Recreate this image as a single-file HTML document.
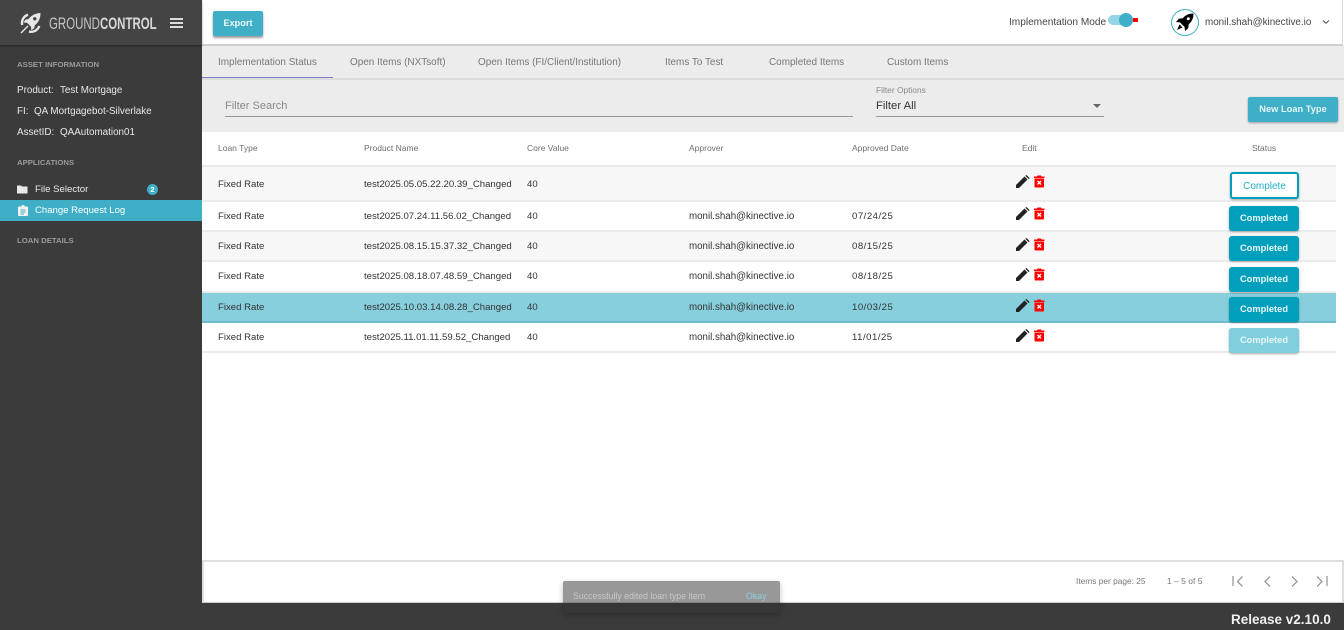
<!DOCTYPE html>
<html lang="en">
<head>
<meta charset="utf-8">
<title>GroundControl</title>
<style>
html,body{margin:0;padding:0;width:1344px;height:630px;overflow:hidden;background:#fff;font-family:"Liberation Sans",sans-serif;}
*{box-sizing:border-box}
.a{position:absolute;white-space:nowrap}
.sb{color:#e8e8e8;font-size:9.850px;line-height:12px}
.sh{color:#9a9a9a;font-size:7.750px;font-weight:bold;line-height:10px}
.tab{color:#777;font-size:9.950px;line-height:12px;top:57px}
.th{color:#6e6e6e;font-size:8.500px;line-height:10px;top:143px}
.row{position:absolute;left:202px;width:1134px;border-bottom:2px solid #ebebeb}
.td{position:absolute;color:#333;font-size:9.600px;line-height:12px;white-space:nowrap}
.m{font-size:9.750px}
.d{letter-spacing:.5px}
.btn{position:absolute;left:1229px;width:70px;height:25px;background:#00a0bc;border-radius:3px;color:#e8f6f9;font-size:9.300px;font-weight:bold;text-align:center;line-height:25px;box-shadow:0 1px 2px rgba(0,0,0,.35)}
svg{position:absolute;display:block}
</style>
</head>
<body>
<!-- page background -->
<div class="a" style="left:202px;top:45px;width:1142px;height:87px;background:#ececec"></div>
<div class="a" style="left:202px;top:0;width:1141px;height:46px;background:#fff;border-bottom:2px solid #cfcfcf;border-right:1px solid #ddd"></div>
<div class="a" style="left:202px;top:78px;width:1142px;height:2px;background:#dcdcdc"></div>
<div class="a" style="left:202px;top:77px;width:131px;height:1px;background:#7f7fd0"></div>

<!-- sidebar -->
<div class="a" style="left:0;top:0;width:202px;height:630px;background:#3b3b3b"></div>
<div class="a" style="left:0;top:0;width:202px;height:45px;background:#444;box-shadow:0 1px 2px rgba(0,0,0,.35)"></div>
<svg style="left:20px;top:12px" width="22" height="22" viewBox="0 0 22 22">
  <path d="M20.500 1C15.500 1.200 11.500 3.200 8.500 7L5.500 7.600 3.500 10.500 7 10.800 11 14.800 11.300 18.300 14.200 16.300 14.800 13.300C18.600 10.300 20.600 6.300 20.500 1Z" fill="#e6e6e6"/>
  <circle cx="14.800" cy="6.800" r="1.700" fill="#444"/>
  <path d="M1 21 8 14" stroke="#e6e6e6" stroke-width="1.400"/>
  <path d="M2.200 13A8.800 8.800 0 0 1 8 2.700M9 19.600A8.800 8.800 0 0 0 19.300 14" stroke="#e6e6e6" stroke-width="2.400" fill="none"/>
</svg>
<div class="a" style="left:49px;top:15px;font-size:16.500px;line-height:18px;color:#c4c4c4;transform-origin:0 50%;transform:scaleX(.695)">GROUND<b style="color:#d8d8d8">CONTROL</b></div>
<div class="a" style="left:170px;top:18px;width:13px;height:1.500px;background:#ddd"></div>
<div class="a" style="left:170px;top:22px;width:13px;height:1.500px;background:#ddd"></div>
<div class="a" style="left:170px;top:26px;width:13px;height:1.500px;background:#ddd"></div>

<div class="a sh" style="left:17px;top:60px">ASSET INFORMATION</div>
<div class="a sb" style="left:17px;top:85px">Product:</div><div class="a sb" style="left:60px;top:85px">Test Mortgage</div>
<div class="a sb" style="left:17px;top:106px">FI:</div><div class="a sb" style="left:34px;top:106px">QA Mortgagebot-Silverlake</div>
<div class="a sb" style="left:17px;top:127px">AssetID:</div><div class="a sb" style="left:60px;top:127px">QAAutomation01</div>
<div class="a sh" style="left:17px;top:158px">APPLICATIONS</div>
<svg style="left:17px;top:184px" width="11" height="10" viewBox="0 0 11 10"><path d="M0 1.500H4L5 2.500H10.500V9.500H0Z" fill="#e8e8e8"/></svg>
<div class="a sb" style="left:35px;top:184px;font-size:9.600px">File Selector</div>
<div class="a" style="left:147px;top:184px;width:11px;height:11px;border-radius:50%;background:#3eafc6;color:#fff;font-size:7.500px;font-weight:bold;line-height:11px;text-align:center">2</div>
<div class="a" style="left:0;top:200px;width:202px;height:21px;background:#3eafc6"></div>
<svg style="left:18px;top:205px" width="10" height="11" viewBox="0 0 10 11"><path d="M1 1.500H3.200C3.400 .5 4.200 0 5 0S6.600 .5 6.800 1.500H9C9.600 1.500 10 1.900 10 2.500V10C10 10.600 9.600 11 9 11H1C.4 11 0 10.600 0 10V2.500C0 1.900 .4 1.500 1 1.500Z" fill="#f2f2f2"/><path d="M2.500 5H7.500M2.500 7H7.500M2.500 9H6" stroke="#3eafc6" stroke-width=".9"/></svg>
<div class="a sb" style="left:35px;top:205px;color:#fff;font-size:9.550px">Change Request Log</div>
<div class="a sh" style="left:17px;top:236px">LOAN DETAILS</div>

<!-- top bar -->
<div class="a" style="left:213px;top:11px;width:50px;height:25px;background:#3eafc6;border-radius:2px;color:#f2fbfd;font-size:9.200px;font-weight:bold;text-align:center;line-height:25px;box-shadow:0 2px 2px rgba(0,0,0,.4)">Export</div>
<div class="a" style="left:1009px;top:16px;color:#444;font-size:10.100px;line-height:13px">Implementation Mode</div>
<div class="a" style="left:1108px;top:15px;width:24px;height:10px;border-radius:5px;background:#94d6e3"></div>
<div class="a" style="left:1133px;top:18px;width:5px;height:4px;background:#f00"></div>
<div class="a" style="left:1119px;top:13px;width:14px;height:14px;border-radius:50%;background:#3eafc6"></div>
<div class="a" style="left:1171px;top:9px;width:28px;height:27px;border-radius:50%;border:1.500px solid #3eafc6;background:#fff"></div>
<svg style="left:1175px;top:12px" width="20" height="20" viewBox="0 0 20 20">
  <path d="M18.500 1.500C14 1.500 10.500 3 7.700 6.300L3.800 6.800 1 10 5 10.400 9.600 15 10 19 13.200 16.200 13.700 12.300C17 9.500 18.500 6 18.500 1.500Z" fill="#000"/>
  <circle cx="13.300" cy="6.700" r="1.500" fill="#fff"/>
  <path d="M4.500 12.500 2 18 7.500 15.500Z" fill="#000"/>
</svg>
<div class="a" style="left:1205px;top:16px;color:#444;font-size:9.850px;line-height:13px">monil.shah@kinective.io</div>
<svg style="left:1322px;top:19px" width="8" height="6" viewBox="0 0 8 6"><path d="M1 1.500 4 4.300 7 1.500" fill="none" stroke="#555" stroke-width="1"/></svg>

<!-- tabs -->
<div class="a tab" style="left:218px">Implementation Status</div>
<div class="a tab" style="left:350px">Open Items (NXTsoft)</div>
<div class="a tab" style="left:478px">Open Items (FI/Client/Institution)</div>
<div class="a tab" style="left:665px">Items To Test</div>
<div class="a tab" style="left:769px">Completed Items</div>
<div class="a tab" style="left:887px">Custom Items</div>

<!-- filters -->
<div class="a" style="left:225px;top:99px;color:#888;font-size:11px;line-height:14px">Filter Search</div>
<div class="a" style="left:225px;top:116px;width:628px;height:1px;background:#999"></div>
<div class="a" style="left:876px;top:85px;color:#888;font-size:8.400px;line-height:10px">Filter Options</div>
<div class="a" style="left:876px;top:99px;color:#333;font-size:11.300px;line-height:14px">Filter All</div>
<div class="a" style="left:1093px;top:104px;width:0;height:0;border-left:4px solid transparent;border-right:4px solid transparent;border-top:4px solid #666"></div>
<div class="a" style="left:876px;top:116px;width:228px;height:1px;background:#999"></div>
<div class="a" style="left:1248px;top:97px;width:90px;height:25px;background:#3eafc6;border-radius:2px;color:#e6f6f9;font-size:9.300px;font-weight:bold;text-align:center;line-height:25px;box-shadow:0 1px 2px rgba(0,0,0,.35)">New Loan Type</div>

<!-- table header -->
<div class="a th" style="left:218px">Loan Type</div>
<div class="a th" style="left:364px">Product Name</div>
<div class="a th" style="left:527px">Core Value</div>
<div class="a th" style="left:689px">Approver</div>
<div class="a th" style="left:852px">Approved Date</div>
<div class="a th" style="left:1022px">Edit</div>
<div class="a th" style="left:1252px">Status</div>
<div class="row" style="top:165px;height:2px;border-bottom:0;background:#e9e9e9"></div>

<!-- rows -->
<div class="row" style="top:167px;height:35px;background:#f7f7f7"></div>
<div class="row" style="top:202px;height:30px;background:#fff"></div>
<div class="row" style="top:232px;height:30px;background:#f7f7f7"></div>
<div class="row" style="top:262px;height:31px;background:#fff"></div>
<div class="row" style="top:293px;height:30px;background:#87cfdd;border-bottom-color:#6fbccb"></div>
<div class="row" style="top:323px;height:30px;background:#fff"></div>

<div class="td" style="left:218px;top:179px">Fixed Rate</div>
<div class="td" style="left:364px;top:179px">test2025.05.05.22.20.39_Changed</div>
<div class="td" style="left:527px;top:179px">40</div>

<div class="td" style="left:218px;top:211px">Fixed Rate</div>
<div class="td" style="left:364px;top:211px">test2025.07.24.11.56.02_Changed</div>
<div class="td" style="left:527px;top:211px">40</div>
<div class="td m" style="left:689px;top:211px">monil.shah@kinective.io</div>
<div class="td d" style="left:852px;top:211px">07/24/25</div>

<div class="td" style="left:218px;top:241px">Fixed Rate</div>
<div class="td" style="left:364px;top:241px">test2025.08.15.15.37.32_Changed</div>
<div class="td" style="left:527px;top:241px">40</div>
<div class="td m" style="left:689px;top:241px">monil.shah@kinective.io</div>
<div class="td d" style="left:852px;top:241px">08/15/25</div>

<div class="td" style="left:218px;top:271px">Fixed Rate</div>
<div class="td" style="left:364px;top:271px">test2025.08.18.07.48.59_Changed</div>
<div class="td" style="left:527px;top:271px">40</div>
<div class="td m" style="left:689px;top:271px">monil.shah@kinective.io</div>
<div class="td d" style="left:852px;top:271px">08/18/25</div>

<div class="td" style="left:218px;top:302px">Fixed Rate</div>
<div class="td" style="left:364px;top:302px">test2025.10.03.14.08.28_Changed</div>
<div class="td" style="left:527px;top:302px">40</div>
<div class="td m" style="left:689px;top:302px">monil.shah@kinective.io</div>
<div class="td d" style="left:852px;top:302px">10/03/25</div>

<div class="td" style="left:218px;top:332px">Fixed Rate</div>
<div class="td" style="left:364px;top:332px">test2025.11.01.11.59.52_Changed</div>
<div class="td" style="left:527px;top:332px">40</div>
<div class="td m" style="left:689px;top:332px">monil.shah@kinective.io</div>
<div class="td d" style="left:852px;top:332px">11/01/25</div>

<!-- icons -->
<svg width="0" height="0" style="left:0;top:0">
  <defs>
    <g id="pen"><path d="M0 13V10L8.500 1.500 11.500 4.500 3 13Z" fill="#222"/><path d="M9.500 .5C10 0 10.500 0 11 .5L13 2.500C13.500 3 13.500 3.500 13 4L12.300 3.700 9.500 1Z" fill="#222"/></g>
    <g id="bin"><path d="M0 1.500H3L3.500 .5H7L7.500 1.500H10.500V3H0Z" fill="#f00"/><path d="M.5 3.500H10V11.500C10 12 9.600 12.500 9 12.500H1.500C.9 12.500 .5 12 .5 11.500Z" fill="#f00"/><path d="M3.500 6 7 9.500M7 6 3.500 9.500" stroke="#fff" stroke-width="1.300"/></g>
  </defs>
</svg>
<svg style="left:1016px;top:175px" width="14" height="14"><use href="#pen"/></svg><svg style="left:1034px;top:175px" width="11" height="13"><use href="#bin"/></svg>
<svg style="left:1016px;top:207px" width="14" height="14"><use href="#pen"/></svg><svg style="left:1034px;top:207px" width="11" height="13"><use href="#bin"/></svg>
<svg style="left:1016px;top:238px" width="14" height="14"><use href="#pen"/></svg><svg style="left:1034px;top:238px" width="11" height="13"><use href="#bin"/></svg>
<svg style="left:1016px;top:268px" width="14" height="14"><use href="#pen"/></svg><svg style="left:1034px;top:268px" width="11" height="13"><use href="#bin"/></svg>
<svg style="left:1016px;top:299px" width="14" height="14"><use href="#pen"/></svg><svg style="left:1034px;top:299px" width="11" height="13"><use href="#bin"/></svg>
<svg style="left:1016px;top:329px" width="14" height="14"><use href="#pen"/></svg><svg style="left:1034px;top:329px" width="11" height="13"><use href="#bin"/></svg>

<!-- status -->
<div class="btn" style="left:1230px;top:172px;width:69px;height:27px;background:#fff;border:2px solid #00a0bc;color:#1fb0c9;font-size:10px;font-weight:normal;line-height:26px">Complete</div>
<div class="btn" style="top:206px">Completed</div>
<div class="btn" style="top:236px">Completed</div>
<div class="btn" style="top:267px">Completed</div>
<div class="btn" style="top:297px">Completed</div>
<div class="btn" style="top:328px;background:#7fcfdd">Completed</div>

<!-- footer -->
<div class="a" style="left:202px;top:560px;width:1142px;height:2px;background:#dedede"></div>
<div class="a" style="left:202px;top:560px;width:2px;height:43px;background:#dedede"></div>
<div class="a" style="left:1342px;top:560px;width:2px;height:43px;background:#dedede"></div>
<div class="a" style="left:202px;top:602px;width:1142px;height:1px;background:#ccc"></div>
<div class="a" style="left:202px;top:603px;width:1142px;height:27px;background:#3b3b3b"></div>
<div class="a" style="left:1076px;top:576px;color:#777;font-size:8.350px;line-height:10px">Items per page: 25</div>
<div class="a" style="left:1167px;top:576px;color:#777;font-size:8.500px;line-height:10px">1 – 5 of 5</div>
<svg style="left:1230px;top:574px" width="105" height="15" viewBox="0 0 105 15" fill="none" stroke="#999" stroke-width="1.300">
  <path d="M3 2V12M12.500 2.500 7.500 7.500 12.500 12.500"/>
  <path d="M40 2.500 35 7.500 40 12.500"/>
  <path d="M62 2.500 67 7.500 62 12.500"/>
  <path d="M87 2.500 92 7.500 87 12.500M97 2V12"/>
</svg>
<div class="a" style="left:1231px;top:612px;color:#f0f0f0;font-size:13.500px;font-weight:bold;line-height:16px">Release v2.10.0</div>

<!-- snackbar -->
<div class="a" style="left:563px;top:581px;width:217px;height:32px;border-radius:2px;background:rgba(50,50,50,.5);box-shadow:0 2px 6px rgba(0,0,0,.25)"></div>
<div class="a" style="left:573px;top:591px;color:#c8c8c8;font-size:8.770px;line-height:11px">Successfully edited loan type item</div>
<div class="a" style="left:746px;top:591px;color:#8fcfe0;font-size:8.770px;line-height:11px">Okay</div>
</body>
</html>
